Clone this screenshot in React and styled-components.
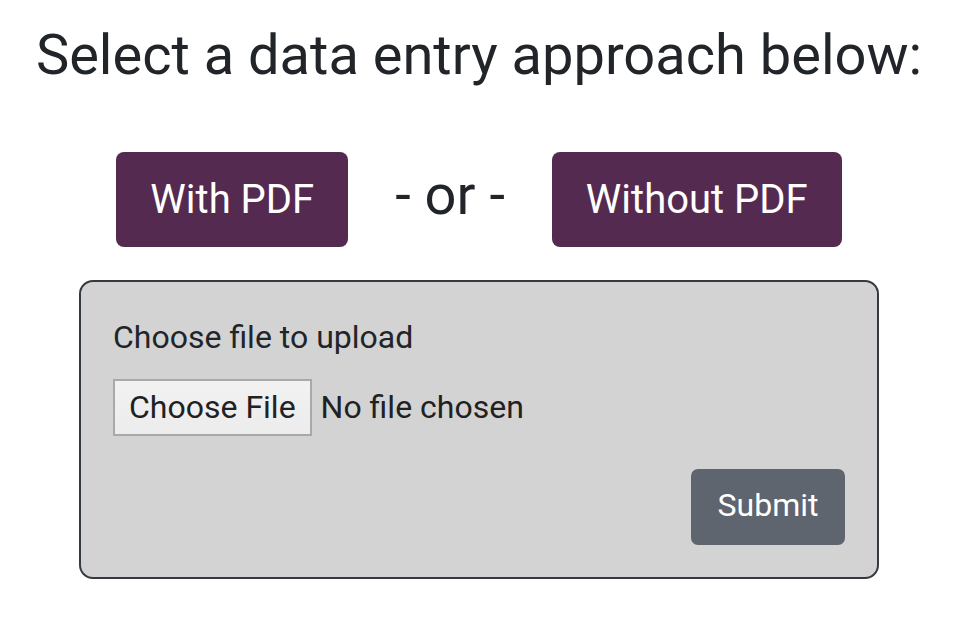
import React from 'react'
import styled, { createGlobalStyle } from 'styled-components'

const GlobalStyle = createGlobalStyle`
  html, body {
    margin: 0;
    padding: 0;
    background: #fff;
  }
  body {
    font-family: Roboto, "Liberation Sans", sans-serif;
    color: #212529;
  }
`

export default function App() {
  return (
    <Page>
      <GlobalStyle />
      <Heading>Select a data entry approach below:</Heading>
      <Choices>
        <ChoiceButton type="button">With PDF</ChoiceButton>
        <Or>- or -</Or>
        <ChoiceButton type="button">Without PDF</ChoiceButton>
      </Choices>
      <UploadPanel onSubmit={e => e.preventDefault()}>
        <Label htmlFor="pdf-upload">Choose file to upload</Label>
        <FileRow>
          <HiddenInput id="pdf-upload" type="file" accept="application/pdf" />
          <FileButton htmlFor="pdf-upload">Choose File</FileButton>
          <FileStatus>No file chosen</FileStatus>
        </FileRow>
        <Actions>
          <SubmitButton type="submit">Submit</SubmitButton>
        </Actions>
      </UploadPanel>
    </Page>
  )
}

const Page = styled.main`
  display: flex;
  flex-direction: column;
  align-items: center;
  padding: 22px 0 0 2px;
`

const Heading = styled.h1`
  margin: 0;
  font-size: 56px;
  font-weight: 400;
  line-height: 1.2;
  color: #212529;
`

const Choices = styled.div`
  display: flex;
  align-items: center;
  gap: 47px;
  margin-top: 63px;
`

const ChoiceButton = styled.button`
  height: 95px;
  padding: 0 34px;
  border: none;
  border-radius: 8px;
  background: #552a50;
  color: #fff;
  font-family: inherit;
  font-size: 40px;
  cursor: pointer;
`

const Or = styled.span`
  font-size: 56px;
  line-height: 1;
  margin-top: -10px;
  color: #212529;
`

const UploadPanel = styled.form`
  box-sizing: border-box;
  width: 800px;
  margin-top: 33px;
  padding: 36px 32px 32px;
  background: #d3d3d3;
  border: 2px solid #343a40;
  border-radius: 14px;
`

const Label = styled.label`
  display: block;
  font-size: 32px;
  line-height: 1.2;
  color: #212529;
`

const FileRow = styled.div`
  display: flex;
  align-items: center;
  gap: 9px;
  margin-top: 22px;
`

const HiddenInput = styled.input`
  display: none;
`

const FileButton = styled.label`
  box-sizing: border-box;
  display: flex;
  align-items: center;
  height: 57px;
  padding: 0 14px;
  border: 2px solid #a9a9a9;
  background: linear-gradient(#f2f2f2, #ececec);
  font-size: 32px;
  color: #212121;
  cursor: pointer;
`

const FileStatus = styled.span`
  font-size: 32px;
  color: #212121;
`

const Actions = styled.div`
  display: flex;
  justify-content: flex-end;
  margin-top: 33px;
`

const SubmitButton = styled.button`
  width: 154px;
  height: 76px;
  padding: 0 0 4px;
  border: none;
  border-radius: 7px;
  background: #5e656e;
  color: #fff;
  font-family: inherit;
  font-size: 32px;
  cursor: pointer;
`
